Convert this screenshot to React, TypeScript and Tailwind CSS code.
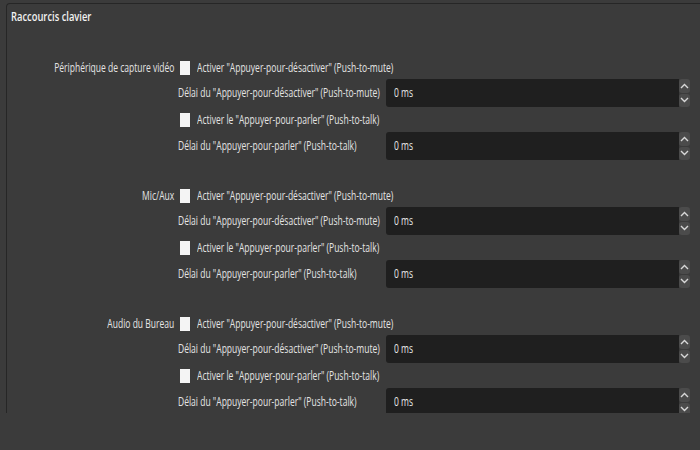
import React from 'react';

const sources = ['Périphérique de capture vidéo', 'Mic/Aux', 'Audio du Bureau'];

// the UI font is drawn narrow, so squeeze text horizontally
function Txt({ children, right, wide }: { children: React.ReactNode; right?: boolean; wide?: boolean }) {
  return (
    <span
      className={`inline-block whitespace-nowrap ${wide ? 'scale-x-[0.78]' : 'scale-x-[0.71]'} ${right ? 'origin-right' : 'origin-left'}`}
    >
      {children}
    </span>
  );
}

function Chevron({ up }: { up?: boolean }) {
  return (
    <svg width="9" height="6" viewBox="0 0 9 6" className="block">
      <path
        d={up ? 'M1 5 L4.5 1.5 L8 5' : 'M1 1 L4.5 4.5 L8 1'}
        fill="none"
        stroke="#d8d8d8"
        strokeWidth="1.4"
      />
    </svg>
  );
}

function SpinBox() {
  return (
    <div className="flex h-[28px] w-[304px]">
      <div className="flex flex-1 items-center rounded-l-[3px] bg-[#1f1f1f] pl-[8px] text-[#e8e8e8]">
        <Txt>0 ms</Txt>
      </div>
      <div className="flex w-[11px] flex-col gap-px">
        <div className="flex flex-1 items-center justify-center rounded-[3px] bg-[#4b4b4b]">
          <Chevron up />
        </div>
        <div className="flex flex-1 items-center justify-center rounded-[3px] bg-[#4b4b4b]">
          <Chevron />
        </div>
      </div>
    </div>
  );
}

function CheckRow({ text, second }: { text: string; second?: boolean }) {
  return (
    <div className={`flex items-center gap-[7px] pl-[2px] ${second ? 'h-[23px] pb-[2px]' : 'h-[22px]'}`}>
      <span className="h-[14px] w-[10px] shrink-0 bg-[#f4f4f4]" />
      <Txt>{text}</Txt>
    </div>
  );
}

function DelayRow({ text }: { text: string }) {
  return (
    <div className="flex items-center">
      <div className="w-[208px] shrink-0 overflow-visible">
        <Txt>{text}</Txt>
      </div>
      <SpinBox />
    </div>
  );
}

function Section({ name }: { name: string }) {
  return (
    <div className="flex">
      <div className="flex h-[22px] w-[174px] shrink-0 items-center justify-end">
        <Txt right>{name}</Txt>
      </div>
      <div className="ml-[4px] flex flex-col">
        <CheckRow text={'Activer "Appuyer-pour-désactiver" (Push-to-mute)'} />
        <DelayRow text={'Délai du "Appuyer-pour-désactiver" (Push-to-mute)'} />
        <div className="h-[2px]" />
        <CheckRow second text={'Activer le "Appuyer-pour-parler" (Push-to-talk)'} />
        <DelayRow text={'Délai du "Appuyer-pour-parler" (Push-to-talk)'} />
      </div>
    </div>
  );
}

export default function App() {
  return (
    <div
      className="h-[450px] w-[700px] overflow-hidden bg-[#3b3b3b] text-[12px] leading-[16px] text-[#e4e4e4]"
      style={{ fontFamily: '"Open Sans", "Noto Sans", sans-serif' }}
    >
      <div className="h-[413px] overflow-hidden pt-[3px]">
        <div className="ml-[6px] w-[720px] rounded-tl-[4px] border-l border-t border-[#262626] pb-[40px]">
          <div className="pl-[4px] pt-[5px] text-[12px] font-semibold text-[#f2f2f2]">
            <Txt wide>Raccourcis clavier</Txt>
          </div>
          <div className="-ml-[7px] mt-[32px] flex flex-col gap-[25px]">
            {sources.map((s) => (
              <Section key={s} name={s} />
            ))}
          </div>
        </div>
      </div>
    </div>
  );
}
